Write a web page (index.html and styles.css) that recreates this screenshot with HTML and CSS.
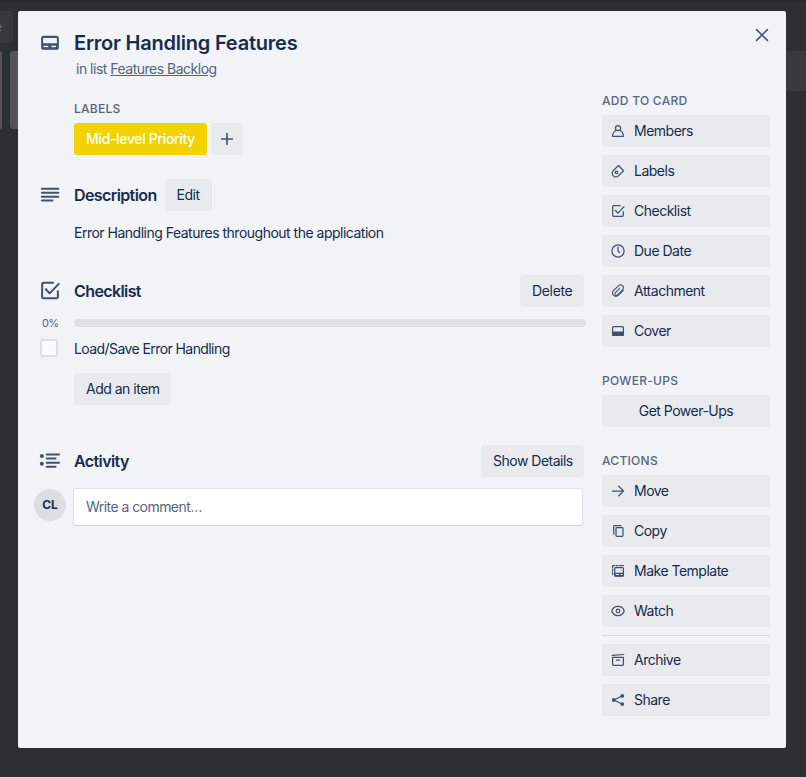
FILE: index.html
```html
<!DOCTYPE html>
<html lang="en">
<head>
<meta charset="utf-8">
<title>Error Handling Features</title>
<link rel="stylesheet" href="styles.css">
</head>
<body>
<div class="board">
  <div class="topbar"></div>
  <div class="board-header"><span class="board-button">e</span></div>
  <div class="lists">
    <div class="list"></div>
    <div class="list list-wide"></div>
    <div class="add-list"></div>
  </div>
</div>

<div class="modal">
  <button class="close" aria-label="Close"><svg viewBox="0 0 24 24"><path d="M5.5 5.5 18.5 18.5M18.5 5.5 5.5 18.5"/></svg></button>
  <main class="main">
    <header class="row head">
      <svg class="icon" viewBox="0 0 24 24"><rect x="3" y="5" width="18" height="13.6" rx="1.8"/><path class="solid" fill-rule="evenodd" d="M3 12.4h18v5.6a1 1 0 0 1-1 1H4a1 1 0 0 1-1-1zM4.5 15v1.9h5.5v-1.9zM13.5 15v1.9h5.5v-1.9z"/></svg>
      <div>
        <h1>Error Handling Features</h1>
        <p class="sub">in list <a>Features Backlog</a></p>
      </div>
    </header>

    <section class="labels">
      <h3>Labels</h3>
      <div class="label-list">
        <span class="label">Mid-level Priority</span>
        <button class="btn add"><svg viewBox="0 0 16 16"><path d="M8 2.6v10.8M2.6 8h10.8"/></svg></button>
      </div>
    </section>

    <section class="description">
      <div class="row">
        <svg class="icon" viewBox="0 0 24 24"><path d="M2.7 4.8h18.8M2.7 9.4h18.8M2.7 14h18.8M2.7 18.4h12"/></svg>
        <div class="bar"><h2>Description</h2><button class="btn edit">Edit</button></div>
      </div>
      <p class="text">Error Handling Features throughout the application</p>
    </section>

    <section class="checklist">
      <div class="row">
        <svg class="icon" viewBox="0 0 24 24"><path d="M15.5 2.6H4.6a1.6 1.6 0 0 0-1.6 1.6v14.6a1.6 1.6 0 0 0 1.6 1.6h14.8a1.6 1.6 0 0 0 1.6-1.6v-6.5M7.3 10l4.3 4.7L22 3.9"/></svg>
        <div class="bar spread"><h2>Checklist</h2><button class="btn delete">Delete</button></div>
      </div>
      <div class="row progress"><span class="percent">0%</span><div class="track"></div></div>
      <div class="row item"><span class="checkbox"></span><span class="item-text">Load/Save Error Handling</span></div>
      <button class="btn add-item">Add an item</button>
    </section>

    <section class="activity">
      <div class="row">
        <svg class="icon icon-activity" viewBox="0 0 24 24"><g class="solid"><circle cx="2.7" cy="6.3" r="2.3"/><circle cx="2.7" cy="15.2" r="2.3"/></g><path d="M8.3 4.6h14M8.3 9.2h10M8.3 14h14M8.3 18.6h10"/></svg>
        <div class="bar spread"><h2>Activity</h2><button class="btn show">Show Details</button></div>
      </div>
      <div class="comment-row"><span class="avatar">CL</span><div class="comment">Write a comment…</div></div>
    </section>
  </main>

  <aside class="side">
    <section class="group">
      <h3>Add to card</h3>
      <button class="btn action"><svg viewBox="0 0 16 16"><circle cx="8" cy="5.1" r="2.6"/><path d="M6.2 7.3C3.8 8.5 2.6 10.8 2.6 13.3h10.8c0-2.5-1.2-4.8-3.6-6"/></svg>Members</button>
      <button class="btn action"><svg viewBox="0 0 16 16"><path d="M8.5 2.5 13.6 7.7 8.4 12.9c-1.5 1.5-3.9 1.3-5.1-.1-1.2-1.3-1.1-3.5-.4-4.7z"/><circle cx="6.5" cy="9.3" r="1.3"/></svg>Labels</button>
      <button class="btn action"><svg viewBox="0 0 16 16"><path d="M10.2 2.7H3.7a1 1 0 0 0-1 1v8.6a1 1 0 0 0 1 1h8.6a1 1 0 0 0 1-1V8.7M5.3 7.3 8 10.2l6-6.6"/></svg>Checklist</button>
      <button class="btn action"><svg viewBox="0 0 16 16"><circle cx="8" cy="8" r="6.1"/><path d="M8 3.8V8l1.6 1.6"/></svg>Due Date</button>
      <button class="btn action"><svg class="clip" viewBox="0 0 16 16"><path d="M13.3 7.3 8.2 12.4a3.3 3.3 0 0 1-4.7-4.7l4.9-4.9a2.9 2.9 0 0 1 4.2 4.1l-4.9 4.9a1.5 1.5 0 0 1-2.3-2.2l4.5-4.5"/></svg>Attachment</button>
      <button class="btn action"><svg viewBox="0 0 16 16"><rect x="2.6" y="3.7" width="10.8" height="8.6" rx="1"/><path class="solid" d="M2 8.6h12v3.4a1 1 0 0 1-1 1H3a1 1 0 0 1-1-1z"/></svg>Cover</button>
    </section>
    <section class="group">
      <h3>Power-Ups</h3>
      <button class="btn action center">Get Power-Ups</button>
    </section>
    <section class="group">
      <h3>Actions</h3>
      <button class="btn action"><svg viewBox="0 0 16 16"><path d="M2.4 8h11M8.7 3.2 13.5 8l-4.8 4.8"/></svg>Move</button>
      <button class="btn action"><svg viewBox="0 0 16 16"><rect x="6" y="4.7" width="7" height="8.7" rx=".8"/><path d="M11 2.6H4.7a1 1 0 0 0-1 1v7.3"/></svg>Copy</button>
      <button class="btn action"><svg viewBox="0 0 16 16"><rect x="4.7" y="4.5" width="8.7" height="8.5" rx="1"/><path class="solid" fill-rule="evenodd" d="M4.2 9.7h9.6v3.8H4.2zM5.8 11v1h3v-1zM10.5 11v1h2v-1z"/><path d="M2.6 11.5v-2M2.6 8V6M2.6 4.6v-2h2M6 2.6h2M9.5 2.6h2M12.6 2.6h.8"/></svg>Make Template</button>
      <button class="btn action"><svg viewBox="0 0 16 16"><path d="M1.8 8C2.7 5 5.2 3.4 8 3.4S13.3 5 14.2 8C13.3 11 10.800 12.600 8 12.600S2.700 11 1.800 8z"/><circle cx="8" cy="8" r="1.8"/></svg>Watch</button>
      <hr>
      <button class="btn action"><svg viewBox="0 0 16 16"><path d="M2.4 3.400 13.600 2.500M2.600 5.400h10.800v7.200a.8.8 0 0 1-.8.8H3.400a.8.8 0 0 1-.8-.8zM6.500 8.200h3"/></svg>Archive</button>
      <button class="btn action"><svg viewBox="0 0 16 16"><path d="M12 4 4 8l8 4"/><g class="solid"><circle cx="12.3" cy="3.9" r="1.9"/><circle cx="3.8" cy="8" r="1.9"/><circle cx="12.3" cy="12.1" r="1.9"/></g></svg>Share</button>
    </section>
  </aside>
</div>
</body>
</html>
```
FILE: styles.css
```css
* { box-sizing: border-box; }
body {
  margin: 0;
  width: 806px;
  height: 777px;
  overflow: hidden;
  background: #2c3031;
  color: #172b4d;
  font: 14px/20px Inter, "Liberation Sans", sans-serif;
  letter-spacing: -0.5px;
}
h1, h2, h3, p { margin: 0; }
svg { fill: none; stroke: #42526e; stroke-linecap: round; stroke-linejoin: round; flex: none; }
svg .solid { fill: #42526e; stroke: none; }

.topbar { height: 3px; background: #262a2b; }
.board-header { padding-top: 8px; }
.board-button {
  display: block;
  width: 13px;
  height: 32px;
  border-radius: 0 3px 3px 0;
  background: #373839;
  color: #68696a;
  line-height: 32px;
  text-indent: -6px;
  overflow: hidden;
}
.lists { display: flex; align-items: flex-start; gap: 8px; margin-top: 8px; }
.list { width: 2px; height: 78px; border-radius: 0 3px 3px 0; background: #555354; }
.list-wide { width: 262px; border-radius: 3px; }
.add-list { flex: 1; height: 40px; background: #3a3a3c; }

.modal {
  position: absolute;
  left: 18px;
  top: 11px;
  display: flex;
  width: 768px;
  height: 737px;
  border-radius: 2px;
  background: #f1f3f7;
}
.close { position: absolute; right: 14px; top: 14px; padding: 0; border: 0; background: none; }
.close svg { display: block; width: 20px; height: 20px; stroke-width: 1.9; }

.main { width: 568px; }
.row { display: grid; grid-template-columns: 56px 1fr; }
.icon { width: 24px; height: 24px; margin-left: 20px; align-self: center; stroke-width: 2.3; transform: scale(.875); }
.head { padding-top: 20px; }
.head .icon { align-self: start; }
h1 { font-size: 20px; line-height: 24px; font-weight: 600; letter-spacing: -0.22px; }
.sub { margin: 4px 0 0 2px; color: #56657e; }
.sub a { text-decoration: underline; }
h2 { font-size: 16px; line-height: 32px; font-weight: 600; letter-spacing: -0.6px; }
h3 { color: #56657e; font-size: 12px; line-height: 20px; font-weight: 500; letter-spacing: .28px; text-transform: uppercase; transform: translateY(1px); }

.btn {
  height: 32px;
  padding: 0 12px;
  border: 0;
  border-radius: 3px;
  background: #e8eaee;
  color: #172b4d;
  font: inherit;
  letter-spacing: inherit;
  line-height: 32px;
  white-space: nowrap;
}
.labels { margin: 19px 0 0 56px; }
.label-list { display: flex; gap: 4px; margin-top: 5px; }
.label { width: 133px; height: 32px; border-radius: 3px; background: #f2d200; color: #fff; font-weight: 500; line-height: 32px; text-align: center; letter-spacing: -0.33px; }
.add { width: 32px; padding: 8px; }
.add svg { display: block; width: 16px; height: 16px; stroke-width: 1.6; }

.description { margin-top: 24px; }
.bar { display: flex; gap: 8px; }
.spread { justify-content: space-between; padding-right: 2px; }
.edit { width: 47px; }
.text { margin: 12px 0 0 56px; }

.checklist { margin-top: 32px; }
.delete { width: 64px; letter-spacing: -0.33px; }
.progress { margin-top: 12px; height: 8px; align-items: center; }
.percent { margin-left: 24px; color: #56657e; font-size: 11px; line-height: 8px; letter-spacing: -0.6px; }
.track { height: 8px; border-radius: 4px; background: #dfe1e6; }
.item { margin-top: 12px; align-items: center; }
.item-text { letter-spacing: -0.58px; }
.checkbox { width: 18px; height: 18px; margin: -2px 0 0 22px; border: 2px solid #dcdfe5; border-radius: 2px; background: #fafbfc; }
.add-item { width: 97px; margin: 14px 0 0 56px; }

.activity { margin-top: 40px; }
.icon-activity { overflow: visible; }
.show { width: 103px; }
.comment-row { display: flex; gap: 7px; margin: 11px 0 0 16px; align-items: flex-start; }
.avatar { width: 32px; height: 32px; margin-top: 1px; border-radius: 50%; background: #dbdee3; font-size: 12px; font-weight: 700; line-height: 32px; text-align: center; letter-spacing: -0.2px; }
.comment { width: 510px; height: 38px; padding: 0 12px; border: 1px solid #dfe1e8; border-bottom-color: #cfd3dc; border-radius: 3px; background: #fff; color: #56657e; line-height: 35px; letter-spacing: -0.55px; }

.side { width: 168px; margin: 79px 0 0 16px; }
.group { display: flex; flex-direction: column; gap: 8px; margin-bottom: 23px; }
.group h3 { margin-bottom: -3px; }
.action { display: flex; align-items: center; gap: 8px; padding: 0 8px; text-align: left; }
.action svg { width: 16px; height: 16px; stroke-width: 1.25; }
.action .clip { stroke-width: 1.1; }
.center { justify-content: center; }
hr { width: 100%; height: 1px; margin: 0; border: 0; background: #d5d8de; }
```
